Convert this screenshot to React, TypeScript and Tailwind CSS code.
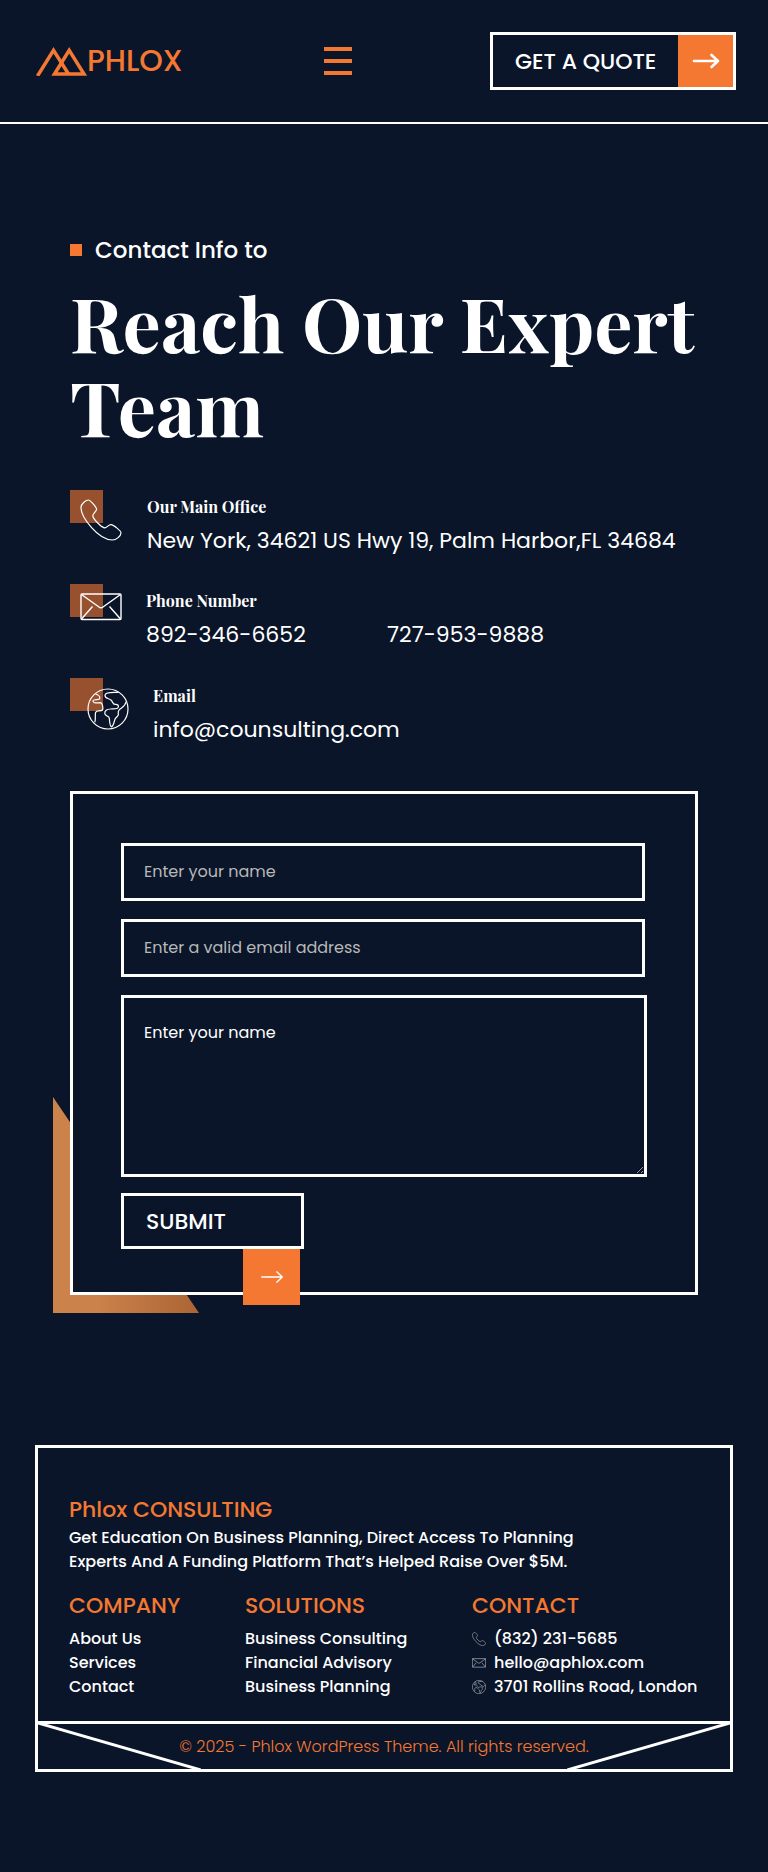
import { useState } from 'react';

const companyLinks = ['About Us', 'Services', 'Contact'];
const solutionLinks = ['Business Consulting', 'Financial Advisory', 'Business Planning'];

function LogoMark() {
  return (
    <svg className="h-[29px] w-[51px] shrink-0" viewBox="0 0 51 29" fill="none" stroke="#f47831" strokeWidth="3.5">
      <path d="M1.5 29 17.5 3.4 32.5 27" />
      <path d="M18.5 27 33.2 3.4 48 27Z" />
    </svg>
  );
}

function PhoneIcon({ className }: { className: string }) {
  return (
    <svg className={className} viewBox="0 0 42 42" fill="none" stroke="white" strokeWidth="1.2" strokeLinejoin="round">
      <path d="M8.2 1C10 .6 16.3 8.2 16.6 10.2C16.8 12 12.6 14.8 12.8 16.8C13.2 19.8 21.6 29 25 28.8C27.4 28.6 28.6 25.4 31 25.6C33.6 25.8 41.2 32 41 34C40.8 37 36.4 41 32.4 41C25.4 40.8 17.2 35 11.6 28.6C5.4 21.6.8 14.4 1 8.4C1 4.8 5.6 1.4 8.2 1Z" />
    </svg>
  );
}

function MailIcon({ className }: { className: string }) {
  return (
    <svg className={className} viewBox="0 0 42 28" fill="none" stroke="white" strokeWidth="1.4" strokeLinejoin="round">
      <rect x="1" y="1" width="40" height="25.5" rx="1" />
      <path d="M1.5 1.5 19 14Q21 15.6 23 14L40.5 1.5M1.5 26 12.5 13.5M40.5 26 29.5 13.5" />
    </svg>
  );
}

function GlobeIcon({ className }: { className: string }) {
  return (
    <svg className={className} viewBox="0 0 42 42" fill="none" stroke="white" strokeWidth="1.2" strokeLinejoin="round">
      <circle cx="21" cy="21" r="20" />
      <path d="M8.5 6.2C10.5 6.4 13 8 12.8 10.5C12.6 12.5 6.8 10.6 6 12.6C5.6 14.8 8 15.4 13.6 14.6C15.4 15 16.6 20.5 15.4 22C13.6 23.8 9.6 22 8.6 24.4C7.8 27 9 30.5 7.8 34.4" />
      <path d="M31.5 4.2C28 4.8 18.6 3.6 18 7C17.6 10.8 21.6 9.8 24.2 12.2C25.8 13.8 25.6 16.6 28.4 16.4C31 16.6 32 17.4 31.2 19.4C30.6 21.4 26.2 20.6 23.4 21C20 21.2 17.4 22.8 17.8 25.6C18.2 28 21.6 27.8 22.2 29.8C22.8 32.2 22.4 37.6 24.4 38.8C26.6 38.2 27 33.6 28 31.2C28.8 29.2 31.4 28.4 31.4 26.6C31.2 24.6 30.4 23.4 32.4 21.6C34.6 19.6 38.4 18.2 39.2 13.6" />
    </svg>
  );
}

function ArrowIcon({ className, strokeWidth = 2.6 }: { className: string; strokeWidth?: number }) {
  return (
    <svg className={className} viewBox="0 0 28 16" fill="none" stroke="white" strokeWidth={strokeWidth} strokeLinecap="round" strokeLinejoin="round">
      <path d="M2 8H26M19.5 2 26 8 19.5 14" />
    </svg>
  );
}

function Header() {
  return (
    <header className="flex items-center justify-between border-b-2 border-white pt-8 pr-8 pb-8 pl-9">
      <a href="#" aria-label="Phlox" className="flex w-[146px] items-center">
        <LogoMark />
        <span className="text-[30px] leading-[30px] font-medium text-[#f47831]">PHLOX</span>
      </a>
      <button type="button" aria-label="Menu" className="ml-1 flex flex-col gap-2">
        <span className="h-1 w-7 bg-[#f47831]" />
        <span className="h-1 w-7 bg-[#f47831]" />
        <span className="h-1 w-7 bg-[#f47831]" />
      </button>
      <a href="#quote" className="flex h-[58px] w-[246px] items-stretch border-3 border-white">
        <span className="flex flex-1 items-center pl-[22px] text-[22px] font-medium whitespace-nowrap">GET A QUOTE</span>
        <span className="flex w-[55px] items-center justify-center bg-[#f47831]">
          <ArrowIcon className="h-4 w-7" />
        </span>
      </a>
    </header>
  );
}

function ContactInfo() {
  const square = 'absolute top-0 left-0 size-[33px] bg-[#98512f]';
  const title = "font-['Playfair_Display','Liberation_Serif',serif] text-base leading-6 font-bold";
  const line = 'text-[22px] leading-9';

  return (
    <div className="mt-[42px] flex flex-col gap-[25px]">
      <div className="flex">
        <div className="relative w-[77px] shrink-0">
          <div className={square} />
          <PhoneIcon className="absolute top-[9px] left-[10px] size-[42px]" />
        </div>
        <div className="pt-[5px]">
          <h2 className={title}>Our Main Office</h2>
          <p className={`mt-1 ${line}`}>New York, 34621 US Hwy 19, Palm Harbor,FL 34684</p>
        </div>
      </div>
      <div className="flex">
        <div className="relative w-[76px] shrink-0">
          <div className={square} />
          <MailIcon className="absolute top-[9px] left-[10px] h-7 w-[42px]" />
        </div>
        <div className="flex-1 pt-[5px]">
          <h2 className={title}>Phone Number</h2>
          <div className={`mt-1 flex ${line}`}>
            <a href="tel:8923466652" className="w-[241px]">892-346-6652</a>
            <a href="tel:7279539888">727-953-9888</a>
          </div>
        </div>
      </div>
      <div className="flex">
        <div className="relative w-[83px] shrink-0">
          <div className={square} />
          <GlobeIcon className="absolute top-[10px] left-[17px] size-[42px]" />
        </div>
        <div className="pt-1.5">
          <h2 className={title}>Email</h2>
          <p className={`mt-1 ${line}`}>
            <a href="mailto:info@counsulting.com">info@counsulting.com</a>
          </p>
        </div>
      </div>
    </div>
  );
}

function ContactForm() {
  const [form, setForm] = useState({ name: '', email: '', message: '' });

  return (
    <div className="relative mt-[43px]">
      {/* Accent triangle behind the form corner */}
      <div className="absolute -bottom-[18px] -left-[17px] h-[216px] w-[146px] bg-linear-to-r from-[#cb824b] from-30% to-[#ab6434] [clip-path:polygon(0_0,100%_100%,0_100%)]" />
      <form
        onSubmit={e => e.preventDefault()}
        className="relative border-3 border-white bg-[#0a1529] pt-[49px] pr-[50px] pb-[43px] pl-12"
      >
        <input
          type="text"
          aria-label="Name"
          placeholder="Enter your name"
          value={form.name}
          onChange={e => setForm({ ...form, name: e.target.value })}
          className="block h-[58px] w-full border-3 border-white pb-0.5 pl-5 text-base outline-none placeholder:text-[#b8b8b8]"
        />
        <input
          type="email"
          aria-label="Email address"
          placeholder="Enter a valid email address"
          value={form.email}
          onChange={e => setForm({ ...form, email: e.target.value })}
          className="mt-[18px] block h-[58px] w-full border-3 border-white pb-0.5 pl-5 text-base outline-none placeholder:text-[#b8b8b8]"
        />
        <textarea
          aria-label="Message"
          placeholder="Enter your name"
          value={form.message}
          onChange={e => setForm({ ...form, message: e.target.value })}
          className="mt-[18px] block h-[182px] w-[calc(100%+2px)] border-3 border-white pt-[23px] pl-5 text-base outline-none placeholder:text-white"
        />
        <div className="relative mt-4 w-[183px]">
          <button type="submit" className="block h-14 w-full border-3 border-white pl-[22px] text-left text-[22px] font-medium">
            SUBMIT
          </button>
          <span className="absolute top-full right-1 flex h-14 w-[57px] items-center justify-center bg-[#f47831]">
            <ArrowIcon className="h-[14px] w-6" strokeWidth={1.6} />
          </span>
        </div>
      </form>
    </div>
  );
}

function FooterLinks({ title, links }: { title: string; links: string[] }) {
  return (
    <div>
      <h3 className="text-[22px] leading-8 font-medium text-[#f47831]">{title}</h3>
      <ul className="mt-[5px] text-base leading-6 font-medium whitespace-nowrap">
        {links.map(link => (
          <li key={link}>
            <a href="#">{link}</a>
          </li>
        ))}
      </ul>
    </div>
  );
}

function Footer() {
  return (
    <footer className="mx-[35px] mt-[150px] border-3 border-white">
      <div className="px-[31px] pt-[46px] pb-[22px]">
        <h3 className="text-[22px] leading-8 font-medium text-[#f47831]">Phlox CONSULTING</h3>
        <p className="max-w-[530px] text-base leading-6 font-medium">
          Get Education On Business Planning, Direct Access To Planning <br />
          Experts And A Funding Platform That’s Helped Raise Over $5M.
        </p>
        <div className="mt-4 grid grid-cols-[176px_227px_1fr]">
          <FooterLinks title="COMPANY" links={companyLinks} />
          <FooterLinks title="SOLUTIONS" links={solutionLinks} />
          <div>
            <h3 className="text-[22px] leading-8 font-medium text-[#f47831]">CONTACT</h3>
            <ul className="mt-[5px] text-base leading-6 font-medium whitespace-nowrap">
              <li className="flex items-center gap-2">
                <PhoneIcon className="size-[14px]" />
                <a href="tel:8322315685">(832) 231-5685</a>
              </li>
              <li className="flex items-center gap-2">
                <MailIcon className="h-[10px] w-[14px]" />
                <a href="mailto:hello@aphlox.com">hello@aphlox.com</a>
              </li>
              <li className="flex items-center gap-2">
                <GlobeIcon className="size-[14px]" />
                <span>3701 Rollins Road, London</span>
              </li>
            </ul>
          </div>
        </div>
      </div>
      <div className="relative border-t-3 border-white">
        <svg className="absolute top-0 left-0 h-full w-[163px]" viewBox="0 0 163 45" preserveAspectRatio="none" stroke="white" strokeWidth="3">
          <path d="M0-1 163 46" />
        </svg>
        <svg className="absolute top-0 right-0 h-full w-[163px]" viewBox="0 0 163 45" preserveAspectRatio="none" stroke="white" strokeWidth="3">
          <path d="M163-1 0 46" />
        </svg>
        <p className="py-[10px] text-center text-base leading-[25px] font-light text-[#f47831]">
          © 2025 - Phlox WordPress Theme. All rights reserved.
        </p>
      </div>
    </footer>
  );
}

export default function App() {
  return (
    <div className="min-h-screen bg-[#0a1529] pb-[100px] font-['Poppins','Inter',sans-serif] text-white">
      <Header />
      <main className="px-[70px] pt-[113px]">
        <div className="flex h-[26px] items-center gap-[13px]">
          <span className="size-3 bg-[#f47831]" />
          <span className="text-[23px] leading-6 font-medium">Contact Info to</span>
        </div>
        <h1 className="mt-[17px] font-['Playfair_Display','Liberation_Serif',serif] text-[76px] leading-[84px] font-bold">
          Reach Our Expert Team
        </h1>
        <ContactInfo />
        <ContactForm />
      </main>
      <Footer />
    </div>
  );
}
